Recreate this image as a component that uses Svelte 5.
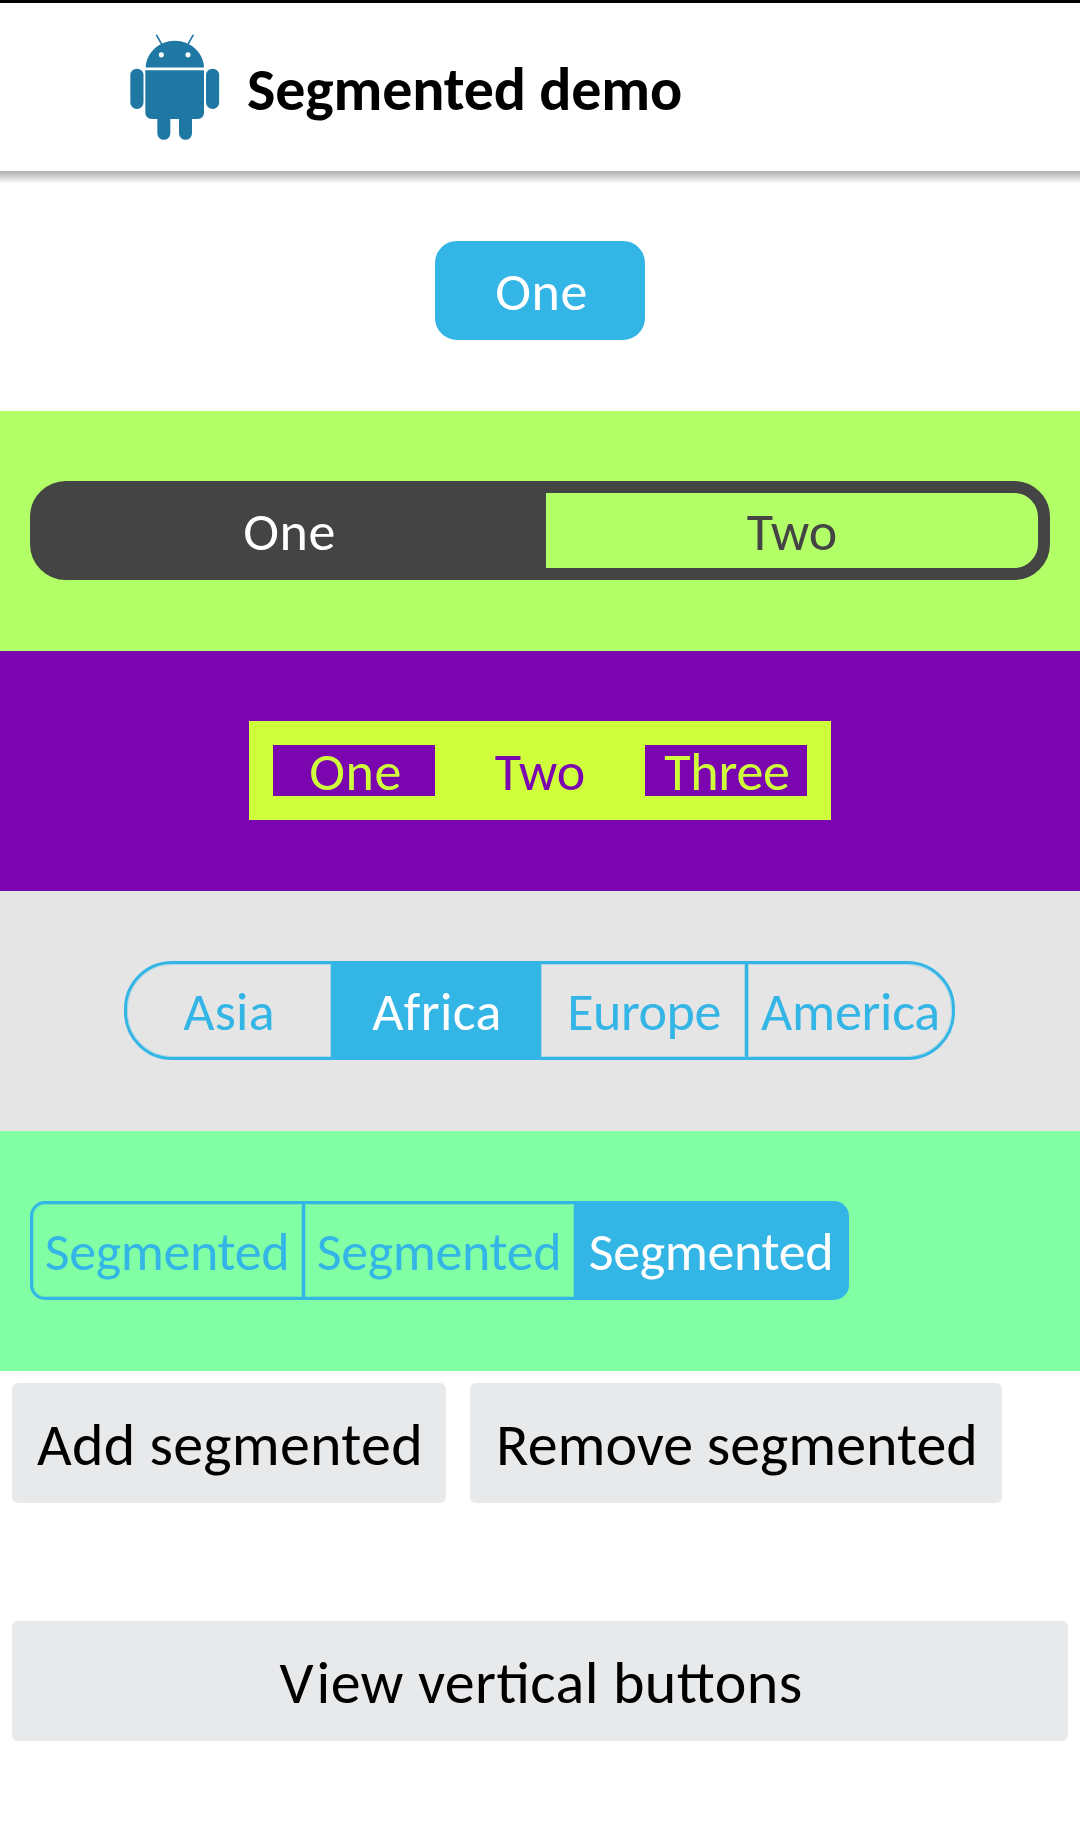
<script>
  const rows = [
    { name: 'single', active: [0], items: [{ label: 'One', track: 0.5, shift: 3 }] },
    { name: 'wide', active: [0], items: [{ label: 'One', track: 0.5, shift: 3 }, { label: 'Two', track: 0, shift: 0 }] },
    {
      name: 'bold',
      active: [1],
      items: [
        { label: 'One', track: 0.5, shift: 3 },
        { label: 'Two', track: 0, shift: 0 },
        { label: 'Three', track: -0.2, shift: 2 }
      ]
    },
    {
      name: 'pill',
      active: [1],
      items: [
        { label: 'Asia', track: 0.25, shift: 1 },
        { label: 'Africa', track: 0.4, shift: 3 },
        { label: 'Europe', track: -0.45, shift: 3 },
        { label: 'America', track: -0.25, shift: 2 }
      ]
    },
    {
      name: 'dynamic',
      active: [2],
      items: [
        { label: 'Segmented', track: -0.38, shift: -1 },
        { label: 'Segmented', track: -0.38, shift: -1 },
        { label: 'Segmented', track: -0.38, shift: -1 }
      ]
    }
  ];
</script>

<div class="screen">
  <header>
    <svg class="robot" viewBox="90 101 270 321" aria-hidden="true">
      <g stroke-width="5" stroke-linecap="round">
        <path d="M170 105L184 130M279 105L265 130" />
      </g>
      <path class="fill" d="M137 201.500C138 157 178 121 224.500 121S311 157 312 201.500Z" />
      <path class="fill" d="M136 210H312V336Q312 356 292 356H276V399A19.500 19.500 0 0 1 237 399V356H211V399A19.500 19.500 0 0 1 172 399V356H156Q136 356 136 336Z" />
      <rect class="fill" x="91" y="205" width="39.500" height="121" rx="19.500" />
      <rect class="fill" x="318" y="205" width="39.500" height="121" rx="19.500" />
      <circle cx="184" cy="163.500" r="7.700" fill="#fff" />
      <circle cx="264" cy="163.500" r="7.700" fill="#fff" />
    </svg>
    <h1>Segmented demo</h1>
  </header>
  <div class="shadow"></div>

  {#each rows as row}
    <section class={row.name}>
      <div class="group">
        {#each row.items as item, i}
          <div class="segment" class:on={row.active.includes(i)}>
            <span style:letter-spacing="{item.track}px" style:margin-left="{item.shift}px">{item.label}</span>
          </div>
        {/each}
      </div>
    </section>
  {/each}

  <div class="actions">
    <button class="add">Add segmented</button>
    <button class="remove">Remove segmented</button>
  </div>
  <button class="view"><span class="cap">V</span>iew vertical buttons</button>
</div>

<style>
  :global(body) { margin: 0; background: #fff; }
  * { box-sizing: border-box; }
  .screen {
    width: 1080px;
    height: 1848px;
    overflow: hidden;
    display: flex;
    flex-direction: column;
    background: #fff;
    border-top: 3px solid #000;
    font-family: Carlito, Lato, sans-serif;
    color: #000;
  }
  header { height: 168px; flex: none; display: flex; align-items: flex-start; padding: 31px 0 0 130px; }
  .robot { width: 90px; height: 107px; stroke: #1f77a4; fill: none; }
  .robot .fill { fill: #1f77a4; stroke: none; }
  .robot circle { stroke: none; }
  h1 { margin: 19px 0 0 27px; font-size: 60px; line-height: 73px; font-weight: 700; letter-spacing: -0.15px; white-space: nowrap; }
  .shadow { height: 12px; margin-bottom: -12px; flex: none; background: linear-gradient(#b0b0b0, #f8f8f8); }

  section { --c: #33b5e6; --text: #fff; --bw: 3px; --r: 0px; --w: 210px; height: 240px; flex: none; padding: 70px 30px 0; }
  .group { display: flex; justify-content: center; height: 99px; }
  .segment {
    width: var(--w);
    padding-top: 2px;
    border: var(--bw) solid var(--c);
    color: var(--c);
    font-size: 54px;
    line-height: 66px;
    white-space: nowrap;
    display: flex;
    align-items: center;
    justify-content: center;
  }
  .segment + .segment { margin-left: calc(var(--bw) * -1); }
  .segment:first-child { border-top-left-radius: var(--r); border-bottom-left-radius: var(--r); }
  .segment:last-child { border-top-right-radius: var(--r); border-bottom-right-radius: var(--r); }
  .on { background: var(--c); color: var(--text); }

  .single { --r: 22px; }
  .wide { --c: #444; --bw: 12px; --r: 36px; --w: 516px; background: #b2ff68; }
  .bold { --c: #cfff3a; --text: #7b06b0; --bw: 24px; background: #7b06b0; }
  .pill { --r: 48px; padding-right: 31px; padding-left: 29px; background: #e5e5e5; }
  .dynamic { --r: 15px; --w: 275px; background: #82ffa5; }
  .dynamic .group { justify-content: flex-start; }
  .pill .segment, .dynamic .segment { box-shadow: inset 0 0 0 1px rgba(51, 181, 230, 0.3); }

  button {
    height: 120px;
    padding: 2px 0 0;
    border: 0;
    border-radius: 6px;
    background: #e8e9eb;
    font: 400 60px/73px Carlito, Lato, sans-serif;
    color: #000;
    white-space: nowrap;
  }
  .actions { display: flex; gap: 24px; padding: 12px 12px 118px; }
  .add { width: 434px; padding-left: 2px; letter-spacing: 0.27px; }
  .remove { width: 532px; padding-left: 2px; }
  .view { margin: 0 12px; padding-left: 2px; letter-spacing: 0.42px; font-feature-settings: 'liga' 1; }
  .cap { letter-spacing: 3px; }
</style>
